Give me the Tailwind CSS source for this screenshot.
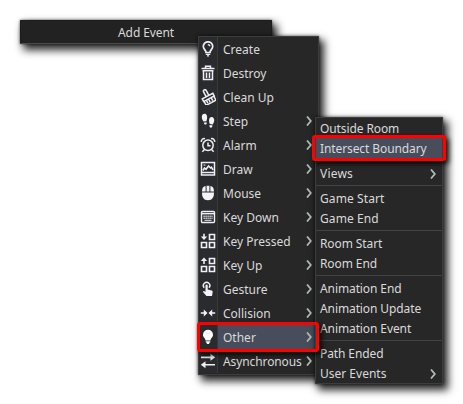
<!DOCTYPE html>
<html lang="en">
<head>
<meta charset="utf-8">
<title>Add Event</title>
<script src="https://cdn.jsdelivr.net/npm/@tailwindcss/browser@4"></script>
</head>
<body class="relative h-[404px] w-[463px] overflow-hidden bg-white font-['Noto_Sans',sans-serif] text-[12px] text-[#dadada]">

<button class="absolute left-[20px] top-[20px] flex h-[24px] w-[252px] items-center justify-center rounded-[1px] border border-[#1c1c1c] border-b-[#4a4a4a] bg-[#222222] pt-px tracking-[-0.1px] shadow-[4px_5px_8px_1px_rgba(0,0,0,0.85),0_0_3px_rgba(0,0,0,0.6)]">Add Event</button>

<!-- Event menu -->
<nav class="absolute left-[198px] top-[36px] flex h-[339px] w-[121px] flex-col border border-[#3d3d3d] bg-[#272727] shadow-[4px_5px_8px_1px_rgba(0,0,0,0.85),0_0_3px_rgba(0,0,0,0.6)] [&>div]:flex [&>div]:h-[24px] [&>div]:shrink-0 [&>div]:items-center [&_span]:flex [&_span]:h-full [&_span]:w-[19px] [&_span]:shrink-0 [&_span]:items-center [&_span]:border-r [&_span]:border-[#3a3a3a] [&_span]:bg-[#2a2b2f] [&_span]:pl-px [&_b]:flex [&_b]:h-full [&_b]:min-w-0 [&_b]:grow [&_b]:items-center [&_b]:pt-px [&_b]:pl-[5px] [&_b]:font-normal [&_b]:whitespace-nowrap">
  <div><span><svg width="16" height="16" viewBox="0 0 16 16" fill="none" stroke="#f0f0f4" stroke-width="1.700"><path d="M6 11.500C6 9 3.300 8.200 3.300 5.500a4.700 4.700 0 0 1 9.400 0C12.700 8.200 10 9 10 11.500Z"/><path d="M5.800 13.300h4.400M7 14.800h2M7.800 3.800c1.300-.2 2 .5 2 1.500" stroke-width="1.300"/></svg></span><b>Create</b></div>
  <div><span><svg width="16" height="16" viewBox="0 0 16 16" fill="none" stroke="#f0f0f4" stroke-width="1.500"><path d="M1.500 3.500h13M5.500 3V1.200h5V3M3.500 6v8.500h9V6M2.500 5.700h11M6.500 7.500V13M9.500 7.500V13"/></svg></span><b>Destroy</b></div>
  <div><span><svg width="16" height="16" viewBox="0 0 16 16" fill="none" stroke="#f0f0f4" stroke-width="1.500"><g transform="rotate(-28 8 8)"><path d="M6.500 7V1.500a1.500 1.500 0 0 1 3 0V7M2 7h12v3H2ZM2.500 10v4.500h11V10M5 10.500v3M7.500 10.500v3M10.500 10.500v3"/></g></svg></span><b>Clean Up</b></div>
  <div><span><svg width="16" height="16" viewBox="0 0 16 16" fill="#f4f4f8"><path d="M4.500 .8C6.900 .8 7.300 3.200 7.100 5.500L6.400 8.200 3.500 8.600C2.800 7 1.700 6 1.800 3.700 1.900 1.900 2.900.8 4.500.8ZM3.800 9.700l2.800-.5c.8 2.600-2.200 3.500-2.800.5ZM11.500 4c2 .1 2.900 1.800 2.700 3.800-.1 1.500-.9 2.300-1.400 3.700l-3-.5c-.4-1.500-1-2.500-.7-4.300.3-1.700 1.200-2.700 2.400-2.700ZM9.600 12.100l3 .5c-.5 3.300-3.800 2.500-3-.5Z"/></svg></span><b>Step</b><svg class="mr-[6px] h-[10px] w-[6px] shrink-0" viewBox="0 0 6 10" fill="none" stroke="#aebbb5" stroke-width="1.800"><path d="M1 .5 4.800 5 1 9.500"/></svg></div>
  <div><span><svg width="16" height="16" viewBox="0 0 16 16" fill="none" stroke="#f0f0f4" stroke-width="1.500"><circle cx="8" cy="8.300" r="5.200"/><path d="M8 5.500v3.200h2.500M1.300 5c-.2-2.300 1.700-3.800 3.700-3.300M14.700 5c.2-2.300-1.700-3.800-3.700-3.300M4.500 12.500 2.300 14.700M11.500 12.500l2.200 2.200"/></svg></span><b>Alarm</b><svg class="mr-[6px] h-[10px] w-[6px] shrink-0" viewBox="0 0 6 10" fill="none" stroke="#aebbb5" stroke-width="1.800"><path d="M1 .5 4.800 5 1 9.500"/></svg></div>
  <div><span><svg width="16" height="16" viewBox="0 0 16 16" fill="none" stroke="#f0f0f4" stroke-width="1.500"><path d="M1.500 1.500h13v12.500h-13ZM2 11.500h12M3 9.500l1.500-2.500L6 8.300 8.500 5l2 2 1-.8L13 9"/><path d="M3.500 4h2" stroke-width="1"/></svg></span><b>Draw</b><svg class="mr-[6px] h-[10px] w-[6px] shrink-0" viewBox="0 0 6 10" fill="none" stroke="#aebbb5" stroke-width="1.800"><path d="M1 .5 4.800 5 1 9.500"/></svg></div>
  <div><span><svg width="16" height="16" viewBox="0 0 16 16" fill="#f4f4f8"><path d="M2 6.500C2 3 3.300 1.400 5.600 1V6.500ZM6.600.8h2.800v5.700H6.600ZM10.400 1C12.700 1.400 14 3 14 6.500H10.400ZM2 7.600h12C14 12.300 12.500 15.300 8 15.300S2 12.300 2 7.600Z"/></svg></span><b>Mouse</b><svg class="mr-[6px] h-[10px] w-[6px] shrink-0" viewBox="0 0 6 10" fill="none" stroke="#aebbb5" stroke-width="1.800"><path d="M1 .5 4.800 5 1 9.500"/></svg></div>
  <div><span><svg width="16" height="16" viewBox="0 0 16 16" fill="none" stroke="#f0f0f4" stroke-width="1.400"><rect x="1.500" y="2.500" width="13" height="11" rx="1"/><path d="M2 4.700h12"/><path d="M3.500 7.200h9M3.500 9.300h9" stroke-dasharray="1.200 .8"/><path d="M4.500 11.300h7" stroke-width="1"/></svg></span><b>Key Down</b><svg class="mr-[6px] h-[10px] w-[6px] shrink-0" viewBox="0 0 6 10" fill="none" stroke="#aebbb5" stroke-width="1.800"><path d="M1 .5 4.800 5 1 9.500"/></svg></div>
  <div><span><svg width="16" height="16" viewBox="0 0 16 16" fill="none" stroke="#f0f0f4" stroke-width="1.600"><path d="M9.500 1.500h5v5h-5ZM1.500 9.500h5v5h-5ZM9.500 9.500h5v5h-5ZM4 .8v4"/><path d="M.8 3.500h6.400L4 7Z" fill="#f0f0f4" stroke="none"/></svg></span><b>Key Pressed</b><svg class="mr-[6px] h-[10px] w-[6px] shrink-0" viewBox="0 0 6 10" fill="none" stroke="#aebbb5" stroke-width="1.800"><path d="M1 .5 4.800 5 1 9.500"/></svg></div>
  <div><span><svg width="16" height="16" viewBox="0 0 16 16" fill="none" stroke="#f0f0f4" stroke-width="1.600"><path d="M9.500 1.500h5v5h-5ZM1.500 9.500h5v5h-5ZM9.500 9.500h5v5h-5ZM4 3v4"/><path d="M.8 4h6.400L4 .5Z" fill="#f0f0f4" stroke="none"/></svg></span><b>Key Up</b><svg class="mr-[6px] h-[10px] w-[6px] shrink-0" viewBox="0 0 6 10" fill="none" stroke="#aebbb5" stroke-width="1.800"><path d="M1 .5 4.800 5 1 9.500"/></svg></div>
  <div><span><svg width="16" height="16" viewBox="0 0 16 16" fill="none" stroke="#f0f0f4" stroke-width="1.500"><path d="M4.200 6.700a3.200 3.200 0 1 1 4.800 0"/><path d="M5.500 4.500a1.100 1.100 0 0 1 2.200 0V8.500l4 1c1 .3 1 1 .9 2l-.6 3.500H6.500L3.200 11.200c-.4-.9.500-1.500 1.200-1L5.500 11Z" fill="#f4f4f8" stroke="none"/></svg></span><b>Gesture</b><svg class="mr-[6px] h-[10px] w-[6px] shrink-0" viewBox="0 0 6 10" fill="none" stroke="#aebbb5" stroke-width="1.800"><path d="M1 .5 4.800 5 1 9.500"/></svg></div>
  <div><span><svg width="16" height="16" viewBox="0 0 16 16" fill="#f4f4f8"><path d="M.8 7.200h3V4.500L7.500 8 3.800 11.500V8.800h-3ZM15.200 7.200h-3V4.500L8.500 8l3.700 3.500V8.800h3Z"/></svg></span><b>Collision</b><svg class="mr-[6px] h-[10px] w-[6px] shrink-0" viewBox="0 0 6 10" fill="none" stroke="#aebbb5" stroke-width="1.800"><path d="M1 .5 4.800 5 1 9.500"/></svg></div>
  <div class="bg-[#474d5a]"><span><svg width="16" height="16" viewBox="0 0 16 16" fill="#fff"><path d="M5.500 11.500C5.500 9 3 8.500 3 5.700a5 5 0 0 1 10 0C13 8.500 10.500 9 10.500 11.500ZM5.800 12.300h4.400v1.300H9.500L9 15H7l-.5-1.400h-.7Z"/></svg></span><b>Other</b><svg class="mr-[6px] h-[10px] w-[6px] shrink-0" viewBox="0 0 6 10" fill="none" stroke="#aebbb5" stroke-width="1.800"><path d="M1 .5 4.800 5 1 9.500"/></svg></div>
  <div><span><svg width="16" height="16" viewBox="0 0 16 16" fill="#f0f0f4"><path d="M1 3.500h9.500V.8L15.200 4.300 10.500 7.800V5.200H1ZM15 10.900H5.500V8.200L.8 11.700 5.500 15.200v-2.600H15Z"/></svg></span><b class="tracking-[-0.1px]">Asynchronous</b><svg class="mr-[6px] h-[10px] w-[6px] shrink-0" viewBox="0 0 6 10" fill="none" stroke="#aebbb5" stroke-width="1.800"><path d="M1 .5 4.800 5 1 9.500"/></svg></div>
</nav>

<!-- Submenu of "Other" -->
<nav class="absolute left-[315px] top-[117px] flex h-[267px] w-[128px] flex-col border border-[#3d3d3d] bg-[#272727] tracking-[-0.1px] shadow-[4px_5px_8px_1px_rgba(0,0,0,0.85),0_0_3px_rgba(0,0,0,0.6)] [&>div]:flex [&>div]:h-[20px] [&>div]:shrink-0 [&>div]:items-center [&>div]:justify-between [&>div]:pt-px [&>div]:pl-[4px] [&>div]:whitespace-nowrap [&>hr]:my-[2px] [&>hr]:shrink-0 [&>hr]:border-[#424242]">
  <div>Outside Room</div>
  <div class="bg-[#474d5a]">Intersect Boundary</div>
  <hr>
  <div class="tracking-[0.2px]">Views<svg class="mr-[6px] h-[10px] w-[6px]" viewBox="0 0 6 10" fill="none" stroke="#aebbb5" stroke-width="1.800"><path d="M1 .5 4.800 5 1 9.500"/></svg></div>
  <hr>
  <div class="tracking-[0.1px]">Game Start</div>
  <div class="tracking-[0.1px]">Game End</div>
  <hr>
  <div>Room Start</div>
  <div>Room End</div>
  <hr>
  <div>Animation End</div>
  <div>Animation Update</div>
  <div>Animation Event</div>
  <hr>
  <div>Path Ended</div>
  <div class="tracking-[0px]">User Events<svg class="mr-[6px] h-[10px] w-[6px]" viewBox="0 0 6 10" fill="none" stroke="#aebbb5" stroke-width="1.800"><path d="M1 .5 4.800 5 1 9.500"/></svg></div>
</nav>

<!-- Highlight frames -->
<div class="absolute left-[197px] top-[322px] h-[30px] w-[122px] rounded-[3px] border-3 border-[#fe0000] shadow-[3px_3px_5px_rgba(0,0,0,0.75)]"></div>
<div class="absolute left-[312px] top-[135px] h-[26px] w-[134px] rounded-[3px] border-3 border-[#fe0000] shadow-[3px_3px_5px_rgba(0,0,0,0.75)]"></div>
</body>
</html>
